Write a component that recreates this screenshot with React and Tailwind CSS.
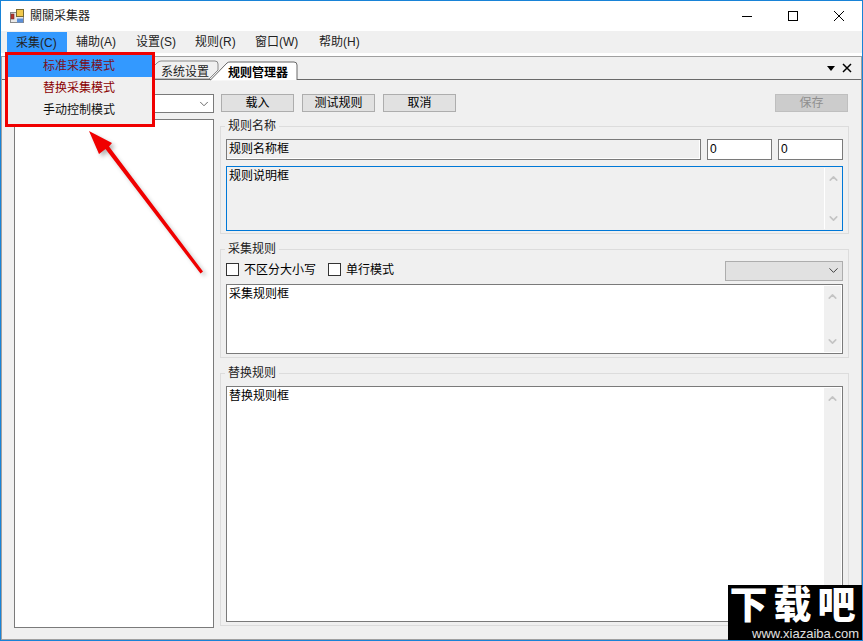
import { ChevronDown, ChevronUp } from "lucide-react";

const font = { fontFamily: '"Liberation Sans", "Noto Sans CJK SC", sans-serif' };

function ScrollCol({ line }) {
  return (
    <div className={`w-[17px] my-px flex flex-col justify-between items-center py-1 shrink-0 bg-[#f0f0f0] ${line ? "border-l border-white" : ""}`}>
      <ChevronUp size={13} strokeWidth={3} className="text-[#c4c4c4]" />
      <ChevronDown size={13} strokeWidth={3} className="text-[#c4c4c4]" />
    </div>
  );
}

function Btn({ children, className }) {
  return (
    <div className={`w-[73px] h-[18px] flex items-center justify-center border border-[#adadad] bg-[#e1e1e1] text-black ${className || ""}`}>
      {children}
    </div>
  );
}

function Check({ label, className }) {
  return (
    <div className={`flex items-center gap-[5px] -mt-[2px] ${className || ""}`}>
      <div className="w-[13px] h-[13px] border border-[#333333] bg-white" />
      <span>{label}</span>
    </div>
  );
}

function Group({ title, className, children }) {
  return (
    <fieldset className={`border border-[#dcdcdc] px-[5px] ${className || ""}`}>
      <legend className="-ml-px px-[3px] h-[16px] leading-[16px] text-[#222222]">{title}</legend>
      {children}
    </fieldset>
  );
}

function AppIcon() {
  return (
    <svg width="15" height="15" viewBox="0 0 15 15" className="shrink-0">
      <rect x="0.500" y="3.500" width="13" height="10" fill="#e8e8e8" stroke="#8a8a8a" />
      <rect x="6.500" y="0.500" width="7" height="7" fill="#f2c94c" stroke="#7a6a30" />
      <rect x="1" y="5" width="3" height="5" fill="#b8322a" stroke="#6b3030" strokeWidth="0.600" />
      <rect x="7" y="9.500" width="6" height="4" fill="#5b8fd8" />
    </svg>
  );
}

function WindowButtons() {
  return (
    <div className="flex items-center ml-auto h-full">
      <svg width="46" height="30" viewBox="0 0 46 30"><path d="M18 15.500h10" stroke="#000" /></svg>
      <svg width="46" height="30" viewBox="0 0 46 30"><rect x="18.500" y="10.500" width="9" height="9" fill="none" stroke="#000" /></svg>
      <svg width="46" height="30" viewBox="0 0 46 30"><path d="M18 10l10 10M28 10l-10 10" stroke="#000" /></svg>
    </div>
  );
}

export default function App() {
  return (
    <div style={font} className="relative w-[863px] h-[641px] overflow-hidden border border-[#1883d7] bg-white text-[12px] text-black flex flex-col">
      {/* title bar */}
      <div className="h-[30px] flex items-center pl-[9px] shrink-0">
        <AppIcon />
        <span className="ml-[5px] text-[#222222]">關關采集器</span>
        <WindowButtons />
      </div>

      {/* menu bar */}
      <div className="h-[22px] bg-[#f0f0f0] shrink-0 flex pl-[6px]">
        <div className="w-[60px] h-[22px] mt-px bg-[#3399ff] text-[#222222] pl-[9px] leading-[22px]">采集(C)</div>
        <div className="flex items-center pl-[9px] text-[#222222]">
          <div className="w-[60px]">辅助(A)</div>
          <div className="w-[59px]">设置(S)</div>
          <div className="w-[60px]">规则(R)</div>
          <div className="w-[64px]">窗口(W)</div>
          <div className="w-[60px]">帮助(H)</div>
        </div>
      </div>
      <div className="h-[3px] shrink-0 bg-white" />

      {/* docked area */}
      <div className="flex-1 flex flex-col border border-[#a0a0a0] bg-[#f0f0f0]">
        {/* tab strip */}
        <div className="h-[23px] shrink-0 flex items-end border-b border-[#696969] pl-[139px]">
          <div className="relative w-[78px] h-[19px]">
            <svg width="78" height="19" viewBox="0 0 78 19" className="absolute left-0 top-0">
              <path d="M0 19L16 3Q18 1 20 1H74Q77 1 77 4V10L68 19Z" fill="#f0f0f0" stroke="#8a8a8a" />
            </svg>
            <span className="absolute left-[20px] top-[3px] text-[#222222]">系统设置</span>
          </div>
          <div className="relative w-[90px] h-[19px] -ml-[9px] -mb-px">
            <svg width="90" height="20" viewBox="0 0 90 20" className="absolute left-0 top-0">
              <path d="M0 19.500L17 2Q18 1 20 1H84Q87 1 87 4V19" fill="#ffffff" stroke="#696969" />
            </svg>
            <span className="absolute left-[18px] top-[3px] font-bold">规则管理器</span>
          </div>
          <div className="ml-auto flex items-center h-full gap-[7px] pr-[9px]">
            <svg width="8" height="5" viewBox="0 0 8 5"><path d="M0 0h8L4 5z" fill="#000" /></svg>
            <svg width="10" height="10" viewBox="0 0 10 10"><path d="M1 1l8 8M9 1l-8 8" stroke="#000" strokeWidth="1.500" /></svg>
          </div>
        </div>

        {/* panel */}
        <div className="flex-1 flex pl-[12px] pr-[12px] pt-[14px] gap-[6px]">
          {/* left column */}
          <div className="w-[200px] flex flex-col shrink-0 pb-[11px]">
            <div className="h-[19px] border border-[#7a7a7a] bg-white flex items-center justify-end pr-[2px] shrink-0">
              <ChevronDown size={14} strokeWidth={1.500} className="text-[#555555]" />
            </div>
            <div className="flex-1 mt-[6px] border border-[#7a7a7a] bg-white" />
          </div>

          {/* right column */}
          <div className="flex-1 flex flex-col min-w-0">
            <div className="flex gap-[8px] shrink-0 h-[18px] pl-px">
              <Btn>载入</Btn>
              <Btn>测试规则</Btn>
              <Btn>取消</Btn>
              <Btn className="ml-auto mr-px !bg-[#cccccc] !border-[#bfbfbf] !text-[#8f8f8f]">保存</Btn>
            </div>

            <Group title="规则名称" className="mt-[6px] h-[116px] shrink-0">
              <div className="flex gap-[6px] mt-[5px] h-[21px]">
                <div className="flex-1 border border-[#7a7a7a] bg-[#f0f0f0] pl-[2px] leading-[19px] shadow-[inset_-1px_-1px_0_#ffffff]">规则名称框</div>
                <div className="w-[65px] border border-[#7a7a7a] bg-white pl-[2px] leading-[19px]">0</div>
                <div className="w-[65px] border border-[#7a7a7a] bg-white pl-[2px] leading-[19px]">0</div>
              </div>
              <div className="flex mt-[6px] h-[65px] border border-[#0078d7] bg-[#f0f0f0] pl-[2px] pr-px">
                <div className="flex-1 leading-[18px]">规则说明框</div>
                <ScrollCol line />
              </div>
            </Group>

            <Group title="采集规则" className="mt-[7px] h-[117px] shrink-0">
              <div className="flex items-center h-[21px] mt-[3px]">
                <Check label="不区分大小写" />
                <Check label="单行模式" className="ml-[12px] gap-[4px]" />
                <div className="ml-auto w-[118px] h-[20px] border border-[#adadad] bg-[#e1e1e1] flex items-center justify-end pr-px">
                  <ChevronDown size={15} strokeWidth={1.500} className="text-[#333333]" />
                </div>
              </div>
              <div className="flex mt-[3px] h-[70px] border border-[#7a7a7a] bg-white pl-[2px] pr-px">
                <div className="flex-1 leading-[18px]">采集规则框</div>
                <ScrollCol />
              </div>
            </Group>

            <Group title="替换规则" className="mt-[7px] h-[261px] shrink-0">
              <div className="flex mt-[5px] h-[236px] border border-[#7a7a7a] bg-white pl-[2px] pr-px">
                <div className="flex-1 leading-[18px]">替换规则框</div>
                <ScrollCol />
              </div>
            </Group>
          </div>
        </div>
      </div>

      {/* open menu */}
      <div className="absolute left-[7px] top-[54px] w-[144px] h-[69px] bg-[#f0f0f0] shadow-[0_2px_1px_#8a8a8a] flex flex-col">
        <div className="h-[22px] bg-[#3399ff] pl-[35px] leading-[22px] text-[#7a1020]">标准采集模式</div>
        <div className="h-[22px] pl-[35px] leading-[22px] text-[#8b0000]">替换采集模式</div>
        <div className="h-[22px] pl-[35px] leading-[23px] text-[#111111]">手动控制模式</div>
      </div>

      {/* annotation */}
      <div className="absolute left-[4px] top-[51px] w-[150px] h-[75px] border-[3px] border-[#f00000] pointer-events-none" />
      <svg width="863" height="641" viewBox="0 0 863 641" className="absolute -left-px -top-px pointer-events-none">
        <g transform="translate(3 3)" opacity="0.350">
          <path d="M89 131L99 154L105.500 149L201 273L203 271.500L108 147.500L112 143Z" fill="#333333" style={{ filter: "blur(2px)" }} />
        </g>
        <path d="M89 131L99 154L105.500 149L200.500 273.500L203 271.500L109 146.500L112 143Z" fill="#f00000" />
      </svg>

      {/* watermark */}
      <div className="absolute right-[-1px] bottom-[-1px] w-[135px] h-[56px] bg-black text-white flex flex-col items-center">
        <div className="h-[41px] text-[38px] leading-[41px] font-black tracking-[6px] whitespace-nowrap">下载吧</div>
        <div className="h-[15px] text-[13px] leading-[15px] text-[#e0e0e0] whitespace-nowrap ml-[20px]">www.xiazaiba.com</div>
      </div>
    </div>
  );
}
